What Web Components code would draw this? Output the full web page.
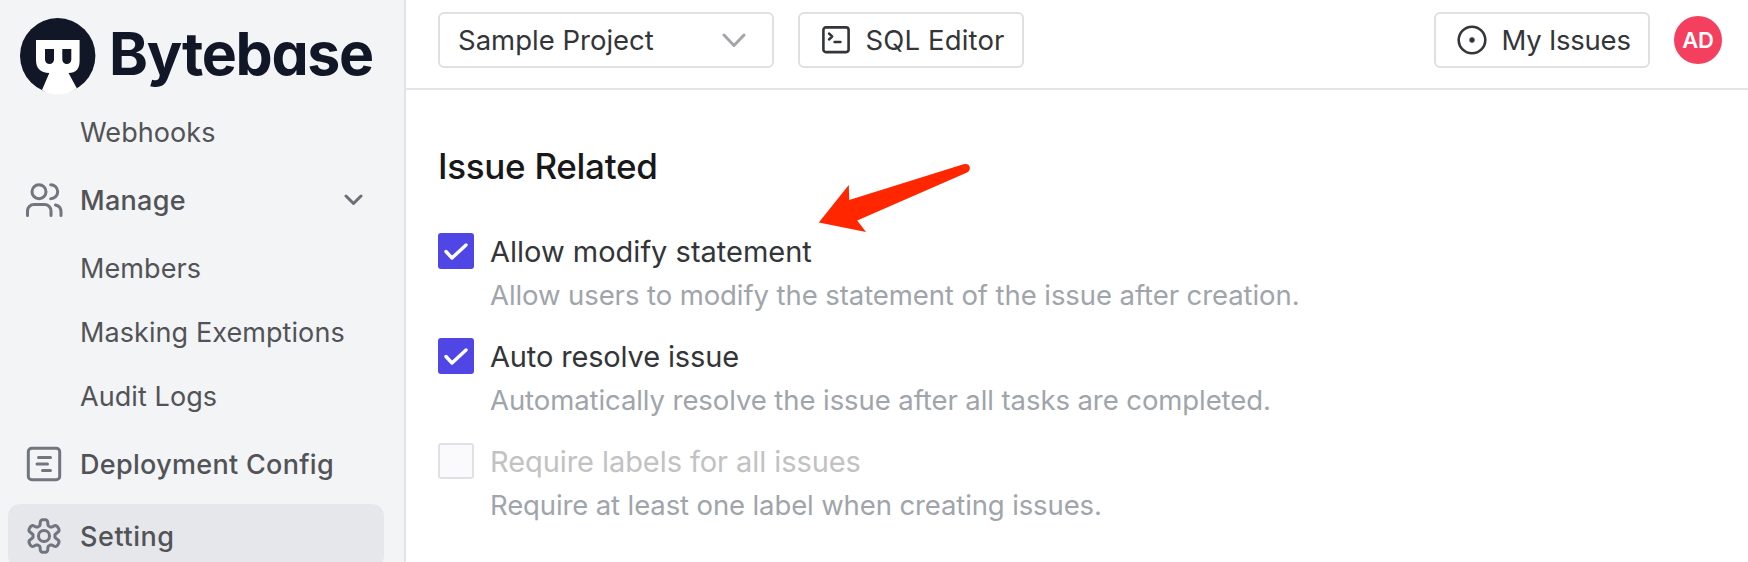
<!DOCTYPE html>
<html lang="en">
<head>
<meta charset="utf-8">
<title>Bytebase</title>
<style>
body{margin:0;background:#fff;overflow:hidden;font-family:Inter,"Liberation Sans",sans-serif}
</style>
</head>
<body>
<bb-app></bb-app>
<script>
const define = (name, html, setup) => customElements.define(name, class extends HTMLElement {
  connectedCallback() {
    if (this.shadowRoot) return;
    const t = document.createElement('template');
    t.innerHTML = html;
    this.attachShadow({mode: 'open'}).append(t.content.cloneNode(true));
    if (setup) setup(this, this.shadowRoot);
  }
});

define('bb-logo', `
<style>
:host{display:flex;flex:none;align-items:center;height:100px;padding-left:18px;box-sizing:border-box;color:#111727}
svg{flex:none;width:80px;height:80px;margin-top:12px}
span{margin-left:11px;margin-top:8px;font-size:59px;font-weight:700;line-height:72px;letter-spacing:-1.3px;font-feature-settings:"cv11"}
</style>
<svg viewBox="18 16 80 80">
  <circle cx="57.7" cy="55.8" r="37.7" fill="#111727"/>
  <path fill="#fff" d="M36 40H79.6V61Q79.6 73 68.5 73L76.8 88.2Q68 94.5 58.5 94.5Q49 94.5 42 90L49.3 73Q36 72.500 36 60Z"/>
  <path fill="#111727" d="M45 49h9v10.500a4.500 4.500 0 0 1-9 0zM62.300 49h9v10.500a4.500 4.500 0 0 1-9 0z"/>
</svg><span>Bytebase</span>`);

define('bb-nav-item', `
<style>
:host{display:flex;align-items:center;height:64px;margin-left:8px;width:376px;box-sizing:border-box;padding:0 21px 0 16px;border-radius:12px;color:#525356;font-size:27px;letter-spacing:.08px;white-space:nowrap}
:host([top]){font-weight:500;letter-spacing:.3px}
:host([active]){background:#e5e7eb;letter-spacing:.55px}
.icon{flex:none;width:40px;height:40px;margin-right:16px;color:#71757f}
.label{flex:1}
</style>
<div class="icon"><slot name="icon"></slot></div>
<div class="label"><slot></slot></div>
<slot name="end"></slot>`);

define('bb-icon', `
<style>
:host{display:block;line-height:0}
svg{fill:none;stroke:currentColor;stroke-linecap:round;stroke-linejoin:round;stroke-width:3}
</style><svg></svg>`, (el, root) => {
  const w = +el.getAttribute('w'), h = +(el.getAttribute('h') || w);
  const svg = root.querySelector('svg');
  svg.setAttribute('viewBox', `0 0 ${w} ${h}`);
  svg.setAttribute('width', w);
  svg.setAttribute('height', h);
  let gear = '';
  for (let i = 0; i < 144; i++) {
    const a = i / 144 * 2 * Math.PI, c = Math.cos(6 * a);
    const r = 13.6 + 2.8 * Math.tanh(2.1 * c + .25);
    gear += (i ? 'L' : 'M') + (20 + r * Math.sin(a)).toFixed(2) + ' ' + (20 - r * Math.cos(a)).toFixed(2);
  }
  svg.innerHTML = {
    users: '<circle cx="15" cy="11.700" r="7"/><path d="M3.500 35.500V31a6.500 6.500 0 0 1 6.500-6.500H20.500a6.500 6.500 0 0 1 6.500 6.500v4.500M26.700 4.700a7 7 0 0 1 0 14M31.500 25q5.500 1.200 5.500 7v3.500"/>',
    deploy: '<rect x="4.300" y="4.300" width="31.400" height="31.400" rx="3.500"/><path d="M14.500 13.500H26.500M13 20H23.500M18.500 26.500H26.500"/>',
    gear: `<path d="${gear}Z"/><circle cx="20" cy="20" r="5.500"/>`,
    down: '<path d="M2 2l7.500 7.500L17 2"/>',
    arrow: '<path d="M2 2l10 10.500L22 2"/>',
    sql: '<rect x="1.400" y="1.400" width="25.200" height="24.700" rx="2.500" stroke-width="2.600"/><path d="M7 7.500l3.200 3L7 13.500M12.500 16h6" stroke-width="2.400"/>',
    target: '<circle cx="15" cy="15" r="13.300" stroke-width="2.600"/><circle cx="15" cy="15" r="2.700" fill="currentColor" stroke="none"/>',
    check: '<path d="M2 8.500l6 6.500L22 2" stroke-width="3.400"/>'
  }[el.getAttribute('name')];
});

define('bb-sidebar', `
<style>
:host{display:flex;flex-direction:column;width:406px;height:562px;box-sizing:border-box;background:#f3f4f6;border-right:2px solid #e2e3e5;overflow:hidden}
nav{display:flex;flex-direction:column;flex:none}
.group{margin-top:4px;margin-bottom:4px}
.end{color:#6b6f77}
.setting{margin-top:8px}
</style>
<bb-logo></bb-logo>
<nav>
  <bb-nav-item>Webhooks</bb-nav-item>
  <bb-nav-item top class="group"><bb-icon slot="icon" name="users" w="40"></bb-icon>Manage<bb-icon class="end" slot="end" name="down" w="19" h="12"></bb-icon></bb-nav-item>
  <bb-nav-item>Members</bb-nav-item>
  <bb-nav-item>Masking Exemptions</bb-nav-item>
  <bb-nav-item>Audit Logs</bb-nav-item>
  <bb-nav-item top style="margin-top:4px"><bb-icon slot="icon" name="deploy" w="40"></bb-icon>Deployment Config</bb-nav-item>
  <bb-nav-item top active class="setting"><bb-icon slot="icon" name="gear" w="40"></bb-icon>Setting</bb-nav-item>
</nav>`);

define('bb-button', `
<style>
:host{display:flex;align-items:center;box-sizing:border-box;height:56px;border:2px solid #e0e0e3;border-radius:6px;background:#fff;color:#333538;font-size:27.5px;white-space:nowrap}
</style><slot></slot>`);

define('bb-topbar', `
<style>
:host{display:flex;align-items:flex-start;box-sizing:border-box;height:90px;padding:12px 26px 0 32px;border-bottom:2px solid #e5e5e7}
.project{width:336px;padding:0 26px 0 18px;justify-content:space-between}
.project bb-icon{color:#a3a5a9;margin-top:1px}
.sql{width:226px;margin-left:24px;padding-left:21.500px;gap:16px;letter-spacing:.15px}
.mine{width:216px;margin-left:auto;padding-left:21px;gap:14.500px;letter-spacing:-.25px}
.avatar{width:48px;height:48px;margin:4px 0 0 24px;border-radius:50%;background:#f43f5e;color:#fff;font-size:22px;font-weight:600;line-height:48px;text-align:center;letter-spacing:-.2px}
</style>
<bb-button class="project"><span>Sample Project</span><bb-icon name="arrow" w="24" h="15"></bb-icon></bb-button>
<bb-button class="sql"><bb-icon name="sql" w="28" h="28"></bb-icon><span>SQL Editor</span></bb-button>
<bb-button class="mine"><bb-icon name="target" w="30"></bb-icon><span>My Issues</span></bb-button>
<div class="avatar">AD</div>`);

define('bb-option', `
<style>
:host{display:grid;grid-template-columns:36px 1fr;column-gap:16px;height:105px;align-content:start;white-space:nowrap}
.box{width:36px;height:36px;box-sizing:border-box;border-radius:3px;background:#4f46e5;color:#fff;display:flex;align-items:center;justify-content:center}
:host([disabled]) .box{background:#fafafc;border:2px solid #e0e0e6}
:host([disabled]) bb-icon{display:none}
.title{font-size:29px;line-height:38px;height:36px;color:#333538}
:host([disabled]) .title{color:#c2c2c2;letter-spacing:-.07px}
.desc{grid-column:2;font-size:27.5px;line-height:34px;margin-top:9px;color:#a0a4ab;letter-spacing:-.08px}
:host([disabled]) .desc{letter-spacing:-.12px}
</style>
<div class="box"><bb-icon name="check" w="24" h="17"></bb-icon></div>
<div class="title"><slot></slot></div>
<div class="desc"><slot name="desc"></slot></div>`);

define('bb-settings', `
<style>
:host{display:block;position:relative;padding:56px 0 0 32px}
h2{margin:0 0 47px 0;font-size:35px;line-height:40px;font-weight:500;letter-spacing:-.3px;color:#18181b}
.pointer{position:absolute;left:411px;top:70px}
</style>
<h2>Issue Related</h2>
<bb-option>Allow modify statement<span slot="desc">Allow users to modify the statement of the issue after creation.</span></bb-option>
<bb-option><span style="letter-spacing:-.15px">Auto resolve issue</span><span slot="desc">Automatically resolve the issue after all tasks are completed.</span></bb-option>
<bb-option disabled>Require labels for all issues<span slot="desc">Require at least one label when creating issues.</span></bb-option>
<svg class="pointer" width="156" height="76" viewBox="817 160 156 76"><path fill="#ff2600" d="M818.800 222.500L848.800 185 849.200 200 963.500 164.300Q968.800 163 969.800 167.500 970.200 171 966.500 172.800L857.200 220.500 866 232Z"/></svg>`);

define('bb-app', `
<style>
:host{display:grid;grid-template-columns:406px 1fr;width:1748px;height:562px;overflow:hidden}
</style>
<bb-sidebar></bb-sidebar>
<main><bb-topbar></bb-topbar><bb-settings></bb-settings></main>`);
</script>
</body>
</html>
